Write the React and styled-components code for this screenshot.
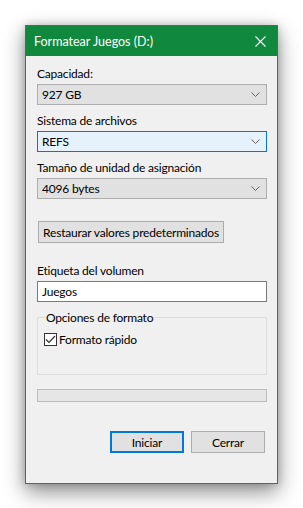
import React from "react";
import styled, { createGlobalStyle } from "styled-components";

const Global = createGlobalStyle`
  html, body {
    margin: 0;
    background: #ffffff;
  }
  body {
    font-family: Lato, "Liberation Sans", sans-serif;
    font-size: 12px;
    letter-spacing: -0.2px;
    color: #000;
  }
`;

const Page = styled.div`
  width: 303px;
  height: 508px;
  padding: 25px 0 0 25px;
  box-sizing: border-box;
`;

const Window = styled.div`
  width: 253px;
  border: 1px solid #1b8a47;
  box-sizing: border-box;
  background: #f0f0f0;
  box-shadow: 0 8px 20px rgba(0, 0, 0, 0.45), 0 0 8px rgba(0, 0, 0, 0.18);
`;

const TitleBar = styled.div`
  height: 30px;
  background: #10893e;
  color: #fff;
  display: flex;
  align-items: center;
  justify-content: space-between;
  padding: 0 11px 0 8px;
  font-size: 12.5px;
  letter-spacing: 0;
`;

const CloseIcon = () => (
  <svg width="11" height="11" viewBox="0 0 11 11">
    <path d="M0.5 0.5 L10.5 10.5 M10.5 0.5 L0.5 10.5" stroke="#fff" strokeWidth="1.1" fill="none" />
  </svg>
);

const Body = styled.div`
  display: flex;
  flex-direction: column;
  padding: 10px 10px 30px 11px;
`;

const Label = styled.div`
  height: 15px;
  line-height: 15px;
  margin-top: ${(p) => p.$top || 0}px;
  margin-bottom: 3px;
`;

const Select = styled.div`
  height: 21px;
  box-sizing: border-box;
  display: flex;
  align-items: center;
  justify-content: space-between;
  padding: 0 6px 0 4px;
  background: ${(p) => (p.$focus ? "#e5f1fb" : "#e1e1e1")};
  border: 1px solid ${(p) => (p.$focus ? "#0078d7" : "#adadad")};
`;

const Chevron = () => (
  <svg width="9" height="5" viewBox="0 0 9 5">
    <path d="M0.5 0.5 L4.5 4.5 L8.5 0.5" stroke="#606060" strokeWidth="1" fill="none" />
  </svg>
);

const Button = styled.div`
  height: 22px;
  box-sizing: border-box;
  display: flex;
  align-items: center;
  justify-content: center;
  background: #e1e1e1;
  border: ${(p) => (p.$default ? "2px solid #0078d7" : "1px solid #adadad")};
  width: ${(p) => p.$w}px;
`;

const ResetButton = styled(Button)`
  margin: 22px 0 0 1px;
`;

const TextInput = styled.div`
  height: 21px;
  box-sizing: border-box;
  background: #fff;
  border: 1px solid #7a7a7a;
  display: flex;
  align-items: center;
  padding: 0 4px;
`;

const Group = styled.fieldset`
  margin: 8px 0 0 0;
  padding: 0 6px;
  height: 65px;
  box-sizing: border-box;
  border: 1px solid #dcdcdc;
  min-width: 0;
`;

const Legend = styled.legend`
  padding: 0 1px;
  margin-left: 1px;
  line-height: 15px;
`;

const CheckRow = styled.label`
  display: flex;
  align-items: center;
  gap: 2px;
  margin-top: 7px;
  line-height: 15px;
`;

const Box = styled.span`
  width: 13px;
  height: 13px;
  box-sizing: border-box;
  border: 1px solid #333;
  background: #fff;
  display: flex;
  align-items: center;
  justify-content: center;
`;

const Progress = styled.div`
  margin-top: 14px;
  height: 13px;
  box-sizing: border-box;
  background: #e6e6e6;
  border: 1px solid #bcbcbc;
`;

const Actions = styled.div`
  display: flex;
  justify-content: flex-end;
  gap: 7px;
  margin: 29px 2px 0 0;
`;

export default function App() {
  return (
    <Page>
      <Global />
      <Window>
        <TitleBar>
          <span>Formatear Juegos (D:)</span>
          <CloseIcon />
        </TitleBar>
        <Body>
          <Label>Capacidad:</Label>
          <Select>
            <span>927 GB</span>
            <Chevron />
          </Select>
          <Label $top={8}>Sistema de archivos</Label>
          <Select $focus>
            <span>REFS</span>
            <Chevron />
          </Select>
          <Label $top={8}>Tamaño de unidad de asignación</Label>
          <Select>
            <span>4096 bytes</span>
            <Chevron />
          </Select>
          <ResetButton $w={186}>Restaurar valores predeterminados</ResetButton>
          <Label $top={20}>Etiqueta del volumen</Label>
          <TextInput>Juegos</TextInput>
          <Group>
            <Legend>Opciones de formato</Legend>
            <CheckRow>
              <Box>
                <svg width="11" height="9" viewBox="0 0 11 9">
                  <path d="M1 4.5 L4 7.5 L10 1" stroke="#333" strokeWidth="1.2" fill="none" />
                </svg>
              </Box>
              <span>Formato rápido</span>
            </CheckRow>
          </Group>
          <Progress />
          <Actions>
            <Button $default $w={74}>Iniciar</Button>
            <Button $w={74}>Cerrar</Button>
          </Actions>
        </Body>
      </Window>
    </Page>
  );
}
